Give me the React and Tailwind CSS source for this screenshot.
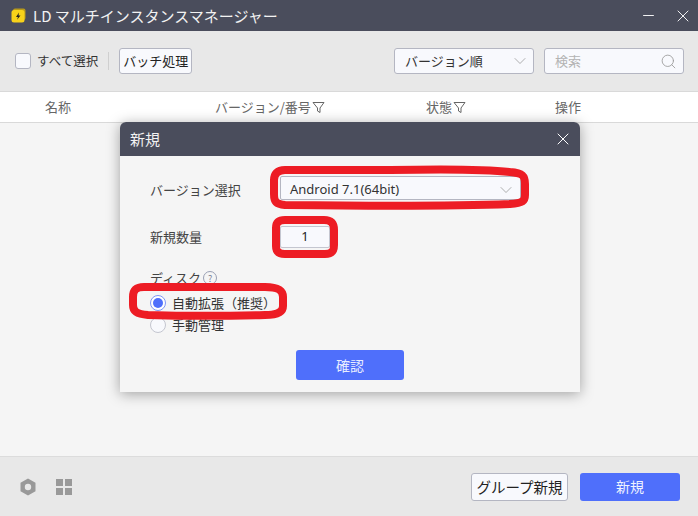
import React from 'react';
import { ChevronDown, Minus, Search, X } from 'lucide-react';

const FONT = "font-['Noto_Sans_CJK_JP','Noto_Sans',sans-serif]";

const FilterIcon = () => (
  <svg width="13" height="13" viewBox="0 0 13 13" fill="none" stroke="#666" strokeWidth="1" className="ml-px">
    <path d="M1 1.5h11L8 7v4.5L5.5 10V7z" />
  </svg>
);

const TitleBar = () => (
  <div className="h-[31px] bg-[#4a4d5c] flex items-center pl-[11px] pr-[5px] text-[#f2f2f2]">
    <svg width="15" height="15" viewBox="0 0 15 15" className="shrink-0">
      <rect x="2" y="0.5" width="12.5" height="11.5" rx="2" fill="#b89a1a" />
      <rect x="0.5" y="2" width="13" height="12.5" rx="2.5" fill="#f7d21a" />
      <path d="M8 4.5 5 9h2l-1 2.8L9.5 7.5h-2z" fill="#222" />
    </svg>
    <span className="ml-[7px] text-[15px] leading-none">LD マルチインスタンスマネージャー</span>
    <div className="ml-auto flex items-center gap-[16px]">
      <Minus size={17} strokeWidth={1.3} className="text-white" />
      <X size={20} strokeWidth={1.1} className="text-white" />
    </div>
  </div>
);

const Toolbar = () => (
  <div className="h-[61px] bg-[#e8e8e8] border-b border-[#d9d9d9] flex items-center pl-[15px] pr-[14px]">
    <span className="w-4 h-4 rounded-[3px] border border-[#b4b6c2] bg-[#f8f9fd]" />
    <span className="ml-1.5 text-[12.5px] text-[#333]">すべて選択</span>
    <span className="ml-[10px] w-px h-[18px] bg-[#cfcfcf]" />
    <button className="ml-[10px] w-[73px] h-[26px] rounded-[3px] border border-[#b4b6c2] bg-[#f8f9fd] text-[13px] text-[#222] whitespace-nowrap">
      バッチ処理
    </button>
    <div className="ml-auto w-[140px] h-[26px] rounded-[3px] border border-[#b4b6c2] bg-[#f8f9fd] flex items-center pl-2.5 pr-[3px] text-[13px] text-[#333]">
      バージョン順
      <ChevronDown size={20} strokeWidth={0.8} className="ml-auto text-[#888]" />
    </div>
    <div className="ml-2.5 w-[140px] h-[26px] rounded-[3px] border border-[#b4b6c2] bg-[#f8f9fd] flex items-center pl-2.5 pr-[6px] text-[13px] text-[#b3b3b3]">
      検索
      <Search size={17} strokeWidth={1.2} className="ml-auto text-[#999]" />
    </div>
  </div>
);

const TableHeader = () => (
  <div className="h-[31px] bg-white border-b border-[#d9d9d9] grid grid-cols-[215px_211px_129px_1fr] items-center text-[13px] text-[#666]">
    <span className="pl-[45px]">名称</span>
    <span className="flex items-center">バージョン/番号<FilterIcon /></span>
    <span className="flex items-center">状態<FilterIcon /></span>
    <span>操作</span>
  </div>
);

const Footer = () => (
  <div className="h-[60px] bg-[#e8e8e8] border-t border-[#dcdcdc] flex items-center pl-5 pr-[18px]">
    <svg width="16" height="18" viewBox="0 0 16 18">
      <path fillRule="evenodd" fill="#999" d="M8 0.5 15.5 4.7v8.6L8 17.5.5 13.3V4.7zM8 5.8a3.2 3.2 0 1 0 0 6.4 3.2 3.2 0 0 0 0-6.4z" />
    </svg>
    <div className="ml-[20px] grid grid-cols-2 gap-0.5">
      <span className="w-[7px] h-[7px] bg-[#999]" />
      <span className="w-[7px] h-[7px] bg-[#999]" />
      <span className="w-[7px] h-[7px] bg-[#999]" />
      <span className="w-[7px] h-[7px] bg-[#999]" />
    </div>
    <button className="ml-auto w-[97px] h-[28px] rounded-[3px] border border-[#b4b6c2] bg-[#f8f9fd] text-[14.5px] text-[#222] whitespace-nowrap">
      グループ新規
    </button>
    <button className="ml-3 w-[100px] h-[28px] rounded-[3px] bg-[#4f6ffb] text-[14px] text-[#f0f3ff]">
      新規
    </button>
  </div>
);

const Annotations = () => (
  <svg width="460" height="270" viewBox="0 0 460 270" fill="none" stroke="#ed1c24" strokeWidth="8" className="absolute left-0 top-0 pointer-events-none">
    {/* 赤い手書きの囲み */}
    <path d="M165 48H270C320 47 365 47 390 50C403 51 405 54 405 62V73C405 79 403 81 390 82C340 84 250 84 165 83C156 82 154 80 154 72V58C154 52 157 48 165 48Z" />
    <path d="M165 98H204C211 98 214 101 214 108V123C214 129 212 132 205 132H165C158 132 156 129 156 124V106C156 101 158 98 165 98Z" />
    <path d="M24 165H145C158 165 163 168 163 175V184C163 190 158 193 145 193C110 194 60 194 28 193C16 192 13 189 13 183V175C13 168 16 165 24 165Z" />
  </svg>
);

const NewDialog = () => (
  <div className="absolute left-[120px] top-[122px] w-[460px] h-[270px] bg-[#f5f5f5] rounded-t-[6px] shadow-[0_2px_14px_rgba(0,0,0,0.35)] overflow-hidden">
    <div className="h-[34px] bg-[#4a4d5c] flex items-center pl-[10px] pr-[7px] text-[#f2f2f2]">
      <span className="text-[15px]">新規</span>
      <X size={20} strokeWidth={1.2} className="ml-auto text-white" />
    </div>
    <div className="pl-[30px] text-[13px] text-[#444]">
      <div className="mt-[20px] flex items-center h-[24px]">
        <span className="w-[130px] pt-[4px]">バージョン選択</span>
        <div className="w-[241px] h-[24px] border border-[#b4b6c2] rounded-[2px] bg-[#f8f9fd] flex items-center pl-[9px] pr-[4px] pt-[3px] text-[#333] font-['Noto_Sans',sans-serif]">
          Android 7.1(64bit)
          <ChevronDown size={20} strokeWidth={0.8} className="ml-auto text-[#888]" />
        </div>
      </div>
      <div className="mt-[26px] flex items-center h-[22px]">
        <span className="w-[130px]">新規数量</span>
        <div className="w-[50px] h-[22px] border border-[#c4c6d0] rounded-[2px] bg-[#f8f9fd] flex items-center justify-center text-[#222] font-['Noto_Sans',sans-serif]">
          1
        </div>
      </div>
      <div className="mt-[21px] flex items-center h-[18px]">
        ディスク
        <span className="ml-[2px] w-[14px] h-[14px] rounded-full border border-[#9aa0b4] text-[9px] leading-none flex items-center justify-center text-[#7a8096]">?</span>
      </div>
      <div className="mt-[6px] flex items-center h-[20px] text-[#333]">
        <span className="w-4 h-4 rounded-full border border-[#7f96f5] bg-white flex items-center justify-center">
          <span className="w-[10px] h-[10px] rounded-full bg-[#4f6ffb]" />
        </span>
        <span className="ml-1.5">自動拡張（推奨）</span>
      </div>
      <div className="mt-[2px] flex items-center h-[20px] text-[#333]">
        <span className="w-4 h-4 rounded-full border border-[#c4c6d0] bg-[#f8f9fd]" />
        <span className="ml-1.5">手動管理</span>
      </div>
    </div>
    <div className="mt-[15px] flex justify-center">
      <button className="w-[108px] h-[30px] rounded-[3px] bg-[#4f6ffb] text-[14px] text-[#e8edff]">確認</button>
    </div>
    <Annotations />
  </div>
);

export default function App() {
  return (
    <div className={`relative w-[698px] h-[516px] flex flex-col overflow-hidden ${FONT}`}>
      <TitleBar />
      <Toolbar />
      <TableHeader />
      <div className="flex-1 bg-[#f5f5f5]" />
      <Footer />
      <NewDialog />
    </div>
  );
}
